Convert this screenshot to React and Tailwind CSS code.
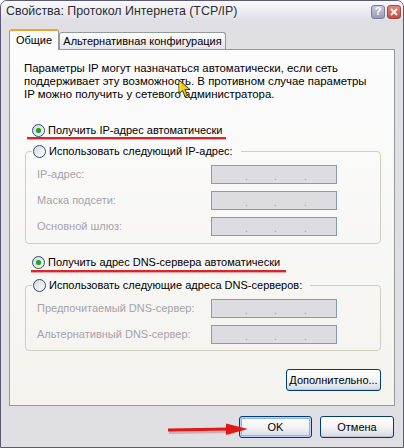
import React from "react";

const Radio = ({ checked }) => (
    <span className="relative w-[13px] h-[13px] rounded-full border border-[#25517c] bg-gradient-to-br from-[#d8d8dc] to-white shrink-0 flex items-center justify-center">
        {checked && (
            <span className="w-[5px] h-[5px] rounded-full bg-[#22a322] shadow-[0_0_1px_#5fd35f]" />
        )}
    </span>
);

const IpBox = () => (
    <div className="w-[126px] h-[19px] border border-[#7f9db9] bg-[#dddce1] relative">
        <span className="absolute left-[33px] bottom-[1px] text-[10px] leading-none text-[#a0a0a6]">.</span>
        <span className="absolute left-[62px] bottom-[1px] text-[10px] leading-none text-[#a0a0a6]">.</span>
        <span className="absolute left-[92px] bottom-[1px] text-[10px] leading-none text-[#a0a0a6]">.</span>
    </div>
);

const Field = ({ label }) => (
    <div className="flex items-center h-[19px] pl-[11px]">
        <span className="w-[174px] text-[#a5a4aa] whitespace-nowrap">{label}</span>
        <IpBox />
    </div>
);

const XpButton = ({ children, width, isDefault }) => (
    <button
        className={`${width} h-[22px] rounded-[3px] border border-[#003c74] bg-gradient-to-b from-white via-[#f4f4f6] to-[#d8d8e2] text-black text-[11px] leading-none flex items-center justify-center ${
            isDefault ? "shadow-[inset_0_0_0_1px_#b9d1fa,inset_0_0_0_2px_#94b4ea]" : "shadow-[inset_0_-1px_0_#c6c5d7]"
        }`}
    >
        {children}
    </button>
);

const RedLine = ({ className }) => (
    <span className={`absolute h-[2px] bg-[#d8262a] shadow-[0_1px_0_#f0a0a0] ${className}`} />
);

export default function App() {
    return (
        <div className="w-[404px] h-[448px] bg-[#e0dfe3] border border-[#5a5a78] rounded-t-[7px] flex flex-col relative overflow-hidden font-['Tahoma','Liberation_Sans',sans-serif] text-[11px] text-black">
            {/* title bar */}
            <div className="h-[21px] flex items-center pl-[5px] pr-[2px] bg-gradient-to-b from-[#fbfbfd] via-[#ececf1] to-[#dcdce4]">
                <span className="text-[12.4px] text-[#2b2b33] flex-1 whitespace-nowrap">Свойства: Протокол Интернета (TCP/IP)</span>
                <span className="w-[14px] h-[14px] rounded-[3px] border border-[#7a7c98] bg-gradient-to-b from-[#c9cbe0] to-[#9a9cb8] flex items-center justify-center text-white text-[11px] font-bold leading-none">?</span>
                <span className="ml-[2px] w-[14px] h-[14px] rounded-[3px] border border-[#9c4a44] bg-gradient-to-b from-[#e88a78] to-[#c8493c] flex items-center justify-center">
                    <svg width="8" height="8" viewBox="0 0 8 8">
                        <path d="M1 1 L7 7 M7 1 L1 7" stroke="white" strokeWidth="1.8" />
                    </svg>
                </span>
            </div>

            {/* body */}
            <div className="flex-1 flex flex-col px-[8px] border-x-[2px] border-[#e0dfe3]">
                {/* tabs */}
                <div className="flex items-end h-[20px] mt-[7px] relative z-10 -ml-[2px] whitespace-nowrap">
                    <div className="w-[50px] h-[21px] -mb-px bg-[#fcfcfd] border-x border-[#919b9c] rounded-t-[3px] border-t-[2px] border-t-[#f2a230] flex items-center justify-center">
                        Общие
                    </div>
                    <div className="w-[167px] h-[17px] bg-gradient-to-b from-white to-[#e4e4ea] border border-b-0 border-[#919b9c] rounded-t-[3px] flex items-center justify-center">
                        Альтернативная конфигурация
                    </div>
                </div>

                {/* panel */}
                <div className="-ml-[2px] w-[386px] h-[357px] border border-[#919b9c] bg-gradient-to-b from-[#fcfcfd] to-[#f4f3ee] flex flex-col">
                    <p className="mt-[12px] pl-[14px] text-[11.4px] leading-[13px] whitespace-nowrap">
                        Параметры IP могут назначаться автоматически, если сеть
                        <br />
                        поддерживает эту возможность. В противном случае параметры
                        <br />
                        IP можно получить у сетевого администратора.
                    </p>

                    <div className="relative mt-[22px] ml-[22px] h-[14px] flex items-center gap-[3px]">
                        <Radio checked />
                        <span>Получить IP-адрес автоматически</span>
                        <RedLine className="left-[-5px] w-[199px] top-[14px]" />
                    </div>

                    <div className="mt-[14px] ml-[15px] w-[356px] border border-[#d0d0bf] rounded-[4px] pb-[7px] flex flex-col gap-[7px]">
                        <div className="-mt-[8px] ml-[6px] self-start h-[14px] pl-[1px] pr-[8px] bg-[#fafaf9] flex items-center gap-[3px]">
                            <Radio />
                            <span>Использовать следующий IP-адрес:</span>
                        </div>
                        <Field label="IP-адрес:" />
                        <Field label="Маска подсети:" />
                        <Field label="Основной шлюз:" />
                    </div>

                    <div className="relative mt-[11px] ml-[22px] h-[14px] flex items-center gap-[3px]">
                        <Radio checked />
                        <span>Получить адрес DNS-сервера автоматически</span>
                        <RedLine className="left-[-1px] w-[255px] top-[15px]" />
                    </div>

                    <div className="mt-[16px] ml-[15px] w-[356px] border border-[#d0d0bf] rounded-[4px] pb-[6px] flex flex-col gap-[7px]">
                        <div className="-mt-[8px] ml-[6px] self-start h-[14px] pl-[1px] pr-[8px] bg-[#f7f7f5] flex items-center gap-[3px]">
                            <Radio />
                            <span>Использовать следующие адреса DNS-серверов:</span>
                        </div>
                        <Field label="Предпочитаемый DNS-сервер:" />
                        <Field label="Альтернативный DNS-сервер:" />
                    </div>

                    <div className="mt-[18px] mr-[13px] self-end">
                        <XpButton width="w-[95px]">Дополнительно...</XpButton>
                    </div>
                </div>

                {/* dialog buttons */}
                <div className="mt-[10px] flex justify-end gap-[8px] mr-[-1px]">
                    <XpButton width="w-[73px]" isDefault>OK</XpButton>
                    <XpButton width="w-[74px]">Отмена</XpButton>
                </div>
            </div>

            {/* annotation: red arrow */}
            <svg className="absolute left-[165px] top-[421px]" width="86" height="16" viewBox="0 0 86 16">
                <path d="M2 8.5 L64 7.5" stroke="#8a2020" strokeOpacity="0.25" strokeWidth="4" transform="translate(1 1.5)" />
                <path d="M2 8 L64 7" stroke="#e01818" strokeWidth="3" />
                <path d="M60 1.5 L82 7 L60 13 Z" fill="#e01818" />
            </svg>

            {/* mouse cursor */}
            <svg className="absolute left-[177px] top-[78px]" width="14" height="20" viewBox="0 0 14 20">
                <path d="M1 1 L1 15 L4.5 11.5 L7 17.5 L9.5 16.5 L7 10.5 L12 10.5 Z" fill="#f0d000" stroke="#3a3000" strokeWidth="1" />
                <path d="M2 3 L2 12" stroke="#fff8a0" strokeWidth="1" />
            </svg>
        </div>
    );
}
